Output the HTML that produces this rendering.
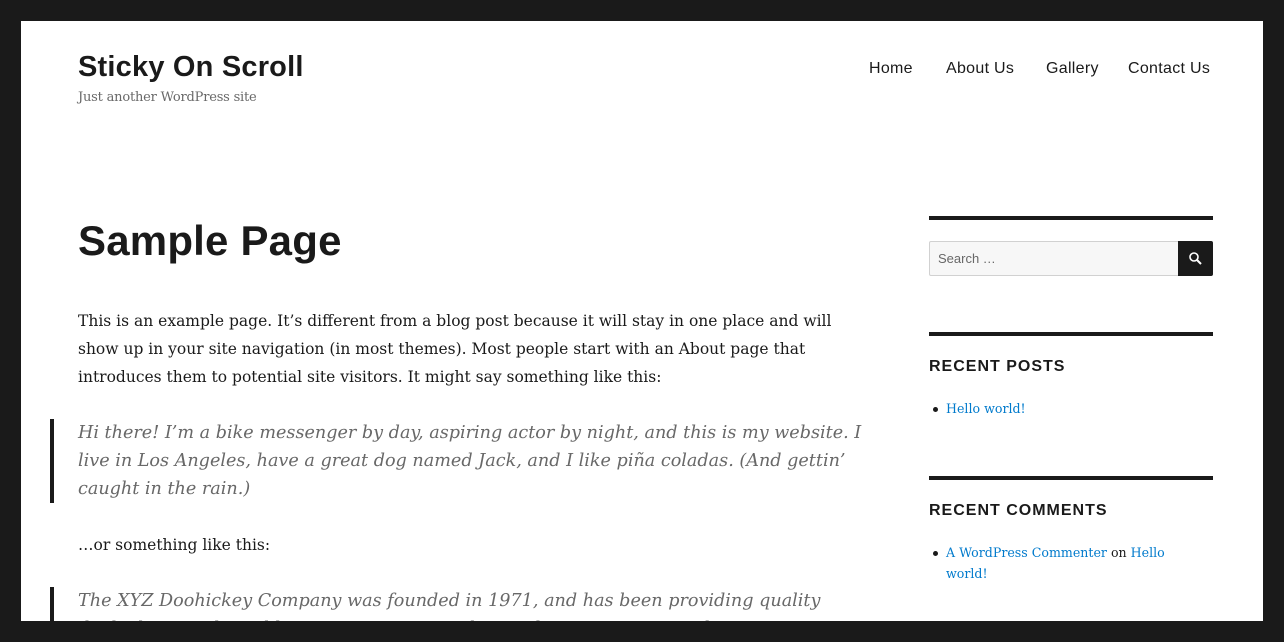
<!DOCTYPE html>
<html><head><meta charset="utf-8"><style>
html,body{margin:0;padding:0;}
body{width:1284px;height:642px;overflow:hidden;background:#1a1a1a;position:relative;font-family:"DejaVu Serif","Liberation Serif",serif;color:#1a1a1a;}
.page{position:absolute;left:21px;top:21px;width:1242px;height:600px;background:#fff;overflow:hidden;}
.title{position:absolute;left:57px;top:28px;font:bold 29px/36px "Liberation Sans",sans-serif;letter-spacing:0.2px;}
.desc{position:absolute;left:57px;top:67px;font:13px/20px "DejaVu Serif",serif;color:#686868;letter-spacing:-0.2px;}
.nav{position:absolute;top:38px;font:16px/20px "Liberation Sans",sans-serif;letter-spacing:0.3px;}
h1{position:absolute;left:57px;top:194px;margin:0;font:bold 42px/52px "Liberation Sans",sans-serif;letter-spacing:0.2px;}
.p{position:absolute;left:57px;width:780px;font-size:15.5px;line-height:28px;}
.bq{position:absolute;left:29px;border-left:4px solid #1a1a1a;padding-left:24px;font-style:italic;color:#686868;font-size:17.6px;line-height:28px;width:790px;}
.rule{position:absolute;left:908px;width:284px;height:4px;background:#1a1a1a;}
.search{position:absolute;left:908px;top:220px;width:249px;height:33px;border:1px solid #d1d1d1;background:#f7f7f7;border-radius:2px 0 0 2px;font:13px/33px "Liberation Sans",sans-serif;color:#686868;}
.btn{position:absolute;left:1157px;top:220px;width:35px;height:35px;background:#1a1a1a;border-radius:0 2px 2px 0;}
.wh{position:absolute;left:908px;font:bold 16px/20px "Liberation Sans",sans-serif;letter-spacing:1px;}
.li{position:absolute;left:925px;font-size:12.6px;line-height:21px;width:270px;}
.li:before{content:"";position:absolute;left:-13px;top:9px;width:5px;height:5px;border-radius:50%;background:#1a1a1a;}
a{color:#007acc;text-decoration:none;}
</style></head><body>
<div class="page">
<div class="title">Sticky On Scroll</div>
<div class="desc">Just another WordPress site</div>
<div class="nav" style="left:848px">Home</div>
<div class="nav" style="left:925px">About Us</div>
<div class="nav" style="left:1025px">Gallery</div>
<div class="nav" style="left:1107px">Contact Us</div>
<h1>Sample Page</h1>
<div class="p" style="top:286px">This is an example page. It’s different from a blog post because it will stay in one place and will show up in your site navigation (in most themes). Most people start with an About page that introduces them to potential site visitors. It might say something like this:</div>
<div class="bq" style="top:398px">Hi there! I’m a bike messenger by day, aspiring actor by night, and this is my website. I live in Los Angeles, have a great dog named Jack, and I like piña coladas. (And gettin’ caught in the rain.)</div>
<div class="p" style="top:510px">…or something like this:</div>
<div class="bq" style="top:566px">The XYZ Doohickey Company was founded in 1971, and has been providing quality doohickeys to the public ever since. Located in Gotham City, XYZ employs over 2,000 people.</div>
<div class="rule" style="top:195px"></div>
<div class="search"><span style="margin-left:8px">Search …</span></div>
<div class="btn"><svg width="35" height="35" viewBox="0 0 35 35"><circle cx="16" cy="16" r="4" fill="none" stroke="#fff" stroke-width="1.6"/><path d="M19 19l4 4" stroke="#fff" stroke-width="2"/></svg></div>
<div class="rule" style="top:311px"></div>
<div class="wh" style="top:336px">RECENT POSTS</div>
<div class="li" style="top:377px"><a>Hello world!</a></div>
<div class="rule" style="top:455px"></div>
<div class="wh" style="top:480px">RECENT COMMENTS</div>
<div class="li" style="top:521px"><a>A WordPress Commenter</a> on <a>Hello</a><br><a>world!</a></div>
</div>
</body></html>
